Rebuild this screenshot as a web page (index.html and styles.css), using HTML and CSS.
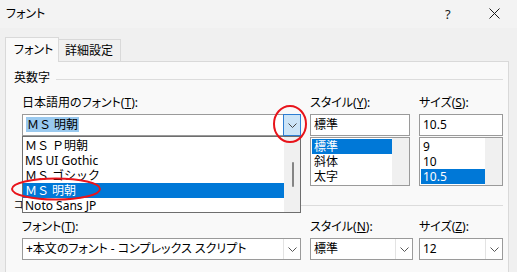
FILE: index.html
```html
<!DOCTYPE html>
<html lang="ja">
<head>
<meta charset="utf-8">
<title>フォント</title>
<link rel="stylesheet" href="styles.css">
</head>
<body>
<div class="dialog">
  <div class="titlebar">
    <span class="title">フォント</span>
    <span class="help">?</span>
    <span class="close">
      <svg width="11" height="11" viewBox="0 0 11 11"><path d="M0.5 0.5 L10.5 10.5 M10.5 0.5 L0.5 10.5" stroke="#1a1a1a" stroke-width="1" fill="none"/></svg>
    </span>
  </div>

  <div class="tabs">
    <div class="tab active">フォント</div>
    <div class="tab second">詳細設定</div>
  </div>

  <div class="panel">
    <div class="group-head"><span class="gl">英数字</span><i class="rule"></i></div>
    <div class="row">
      <div class="col col-font">
        <div class="lbl">日本語用のフォント(<u>T</u>):</div>
        <div class="combo">
          <span class="val"><span class="seltext">ＭＳ 明朝</span></span>
          <span class="drop hot">
            <svg width="9" height="5" viewBox="0 0 9 5"><path d="M0.5 0.5 L4.5 4.5 L8.5 0.5" stroke="#444" stroke-width="1" fill="none"/></svg>
          </span>
        </div>
        <div class="popup">
          <div class="pitems">
            <div class="item">ＭＳ Ｐ明朝</div>
            <div class="item lat">MS UI Gothic</div>
            <div class="item">ＭＳ ゴシック</div>
            <div class="item sel">ＭＳ 明朝</div>
            <div class="item lat">Noto Sans JP</div>
          </div>
          <div class="psb"><i class="thumb"></i></div>
        </div>
      </div>
      <div class="col col-style">
        <div class="lbl">スタイル(<u>Y</u>):</div>
        <div class="textbox">標準</div>
        <div class="listbox">
          <div class="litems">
            <div class="item sel">標準</div>
            <div class="item">斜体</div>
            <div class="item">太字</div>
          </div>
          <div class="lsb"></div>
        </div>
      </div>
      <div class="col col-size">
        <div class="lbl">サイズ(<u>S</u>):</div>
        <div class="textbox lat">10.5</div>
        <div class="listbox">
          <div class="litems">
            <div class="item lat">9</div>
            <div class="item lat">10</div>
            <div class="item lat sel">10.5</div>
          </div>
          <div class="lsb"></div>
        </div>
      </div>
    </div>

    <div class="group-head g2"><span class="gl gl2">コンプレックス スクリプト</span><i class="rule"></i></div>
    <div class="row row2">
      <div class="col col-font">
        <div class="lbl">フォント(<u>T</u>):</div>
        <div class="combo">
          <span class="val">+本文のフォント - コンプレックス スクリプト</span>
          <span class="drop">
            <svg width="9" height="5" viewBox="0 0 9 5"><path d="M0.5 0.5 L4.5 4.5 L8.5 0.5" stroke="#555" stroke-width="1" fill="none"/></svg>
          </span>
        </div>
      </div>
      <div class="col col-style2">
        <div class="lbl">スタイル(<u>N</u>):</div>
        <div class="combo">
          <span class="val">標準</span>
          <span class="drop">
            <svg width="9" height="5" viewBox="0 0 9 5"><path d="M0.5 0.5 L4.5 4.5 L8.5 0.5" stroke="#555" stroke-width="1" fill="none"/></svg>
          </span>
        </div>
      </div>
      <div class="col col-size">
        <div class="lbl">サイズ(<u>Z</u>):</div>
        <div class="combo">
          <span class="val lat">12</span>
          <span class="drop">
            <svg width="9" height="5" viewBox="0 0 9 5"><path d="M0.5 0.5 L4.5 4.5 L8.5 0.5" stroke="#555" stroke-width="1" fill="none"/></svg>
          </span>
        </div>
      </div>
    </div>
  </div>

  <svg class="annot" width="517" height="272" viewBox="0 0 517 272">
    <ellipse cx="290" cy="124" rx="16" ry="18" fill="none" stroke="#e8141b" stroke-width="2"/>
    <ellipse cx="56" cy="189" rx="44" ry="10.5" fill="none" stroke="#e8141b" stroke-width="2"/>
  </svg>
</div>
</body>
</html>
```

FILE: styles.css
```css
* { box-sizing: border-box; }

body {
  margin: 0;
  width: 517px;
  height: 272px;
  overflow: hidden;
  background: #f0f0f0;
  font-family: "Noto Sans", "Noto Sans CJK JP", sans-serif;
  font-size: 12px;
  font-feature-settings: "palt";
  color: #000;
}

u { text-decoration: underline; text-underline-offset: 1px; }

.dialog {
  position: relative;
  width: 517px;
  height: 272px;
}

.titlebar {
  height: 28px;
  background: #f3f3f3;
  display: flex;
  align-items: center;
  padding-left: 6px;
}

.title {
  flex: 1;
  font-size: 12px;
  line-height: 14px;
}

.help {
  font-family: "Noto Sans", sans-serif;
  font-size: 13px;
  line-height: 14px;
  width: 8px;
  margin-right: 36px;
  color: #1a1a1a;
}

.close {
  display: flex;
  width: 11px;
  height: 11px;
  margin-right: 17px;
  margin-top: -1px;
}

.tabs {
  height: 33px;
  display: flex;
  align-items: flex-end;
  padding-left: 5px;
}

.tab {
  height: 22px;
  display: flex;
  align-items: center;
  border: 1px solid #d9d9d9;
  border-bottom: none;
  background: #f0f0f0;
  line-height: 14px;
  white-space: nowrap;
}

.tab.active {
  width: 54px;
  height: 25px;
  padding-left: 8px;
  background: #f9f9f9;
  position: relative;
  z-index: 1;
  margin-bottom: -1px;
}

.tab.second {
  width: 62px;
  padding-left: 6px;
  border-left: none;
}

.panel {
  margin-left: 5px;
  width: 504px;
  height: 211px;
  background: #f9f9f9;
  border: 1px solid #d9d9d9;
  border-bottom: none;
  padding: 9px 5px 0 8px;
}

.group-head {
  height: 14px;
  display: flex;
  align-items: center;
}

.gl {
  line-height: 14px;
  margin-right: 6px;
  white-space: nowrap;
}

.gl2 { font-size: 10px; }

.rule {
  flex: 1;
  height: 1px;
  background: #dcdcdc;
  margin-top: 2px;
}

.row {
  display: flex;
  margin-top: 11px;
  padding-left: 8px;
}

.col { display: flex; flex-direction: column; }

.col-font { width: 279px; position: relative; margin-right: 9px; }
.col-style { width: 100px; margin-right: 9px; }
.col-style2 { width: 103px; margin-right: 6px; }
.col-size { width: 84px; }

.lbl {
  line-height: 14px;
  height: 14px;
  margin-bottom: 4px;
  white-space: nowrap;
}

.lat { font-family: "Noto Sans", sans-serif; }

.textbox, .combo {
  height: 22px;
  border: 1px solid #9a9a9a;
  background: #fff;
  display: flex;
  align-items: center;
  padding-left: 3px;
  line-height: 16px;
  white-space: nowrap;
}

.combo .val { flex: 1; }

.seltext {
  background: #99c9ef;
  padding: 0 1px;
  display: inline-block;
  line-height: 15px;
  font-feature-settings: normal;
}

.drop {
  width: 17px;
  align-self: stretch;
  display: flex;
  align-items: center;
  justify-content: center;
  border-left: 1px solid #e3e3e3;
}

.drop.hot {
  background: #cce4f7;
  border: 1px solid #2d7dd2;
  margin: -1px -1px -1px 0;
  width: 18px;
}

.popup {
  position: absolute;
  top: 40px;
  left: 0;
  width: 279px;
  height: 77px;
  border: 1px solid #6e6e6e;
  background: #fff;
  display: flex;
  overflow: hidden;
  z-index: 2;
  padding-top: 1px;
  font-feature-settings: normal;
}

.pitems { flex: 1; }

.item {
  height: 15px;
  line-height: 15px;
  padding-left: 2px;
  white-space: nowrap;
}

.item.sel { background: #0078d7; color: #fff; }

.psb {
  width: 16px;
  background: #f0f0f0;
  position: relative;
  margin-top: -1px;
}

.thumb {
  position: absolute;
  left: 8px;
  top: 25px;
  width: 2px;
  height: 25px;
  border-radius: 1px;
  background: #858585;
}

.listbox {
  margin-top: 1px;
  height: 49px;
  border: 1px solid #9a9a9a;
  background: #fff;
  display: flex;
  padding: 1px 0 0 1px;
}

.litems { flex: 1; }

.lsb { width: 17px; background: #f0f0f0; margin-top: -1px; }

.g2 { margin-top: 11px; }

.row2 { margin-top: 9px; }

.annot {
  position: absolute;
  left: 0;
  top: 0;
  pointer-events: none;
  z-index: 5;
}
```
